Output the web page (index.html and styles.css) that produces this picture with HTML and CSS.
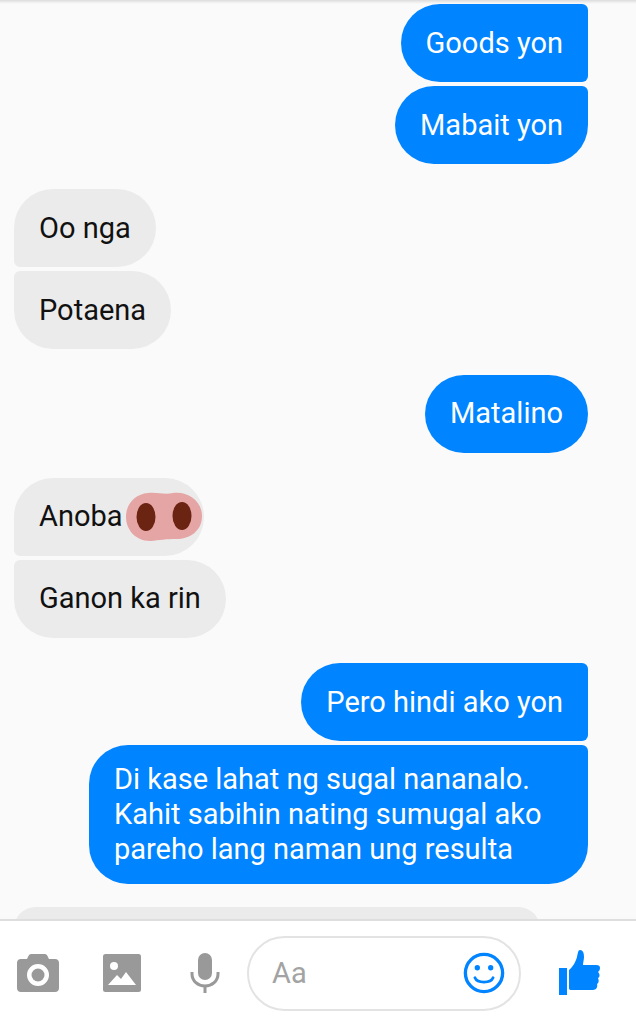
FILE: index.html
```html
<!DOCTYPE html>
<html lang="en">
<head>
    <meta charset="UTF-8">
    <meta name="viewport" content="width=device-width, initial-scale=1.0">
    <title>Messages</title>
    <link rel="stylesheet" href="styles.css">
</head>
<body>
    <div class="app">
        <!-- Conversation -->
        <div class="thread">
            <div class="group group-me">
                <div class="bubble me first">Goods yon</div>
                <div class="bubble me last">Mabait yon</div>
            </div>
            <div class="group group-them">
                <div class="bubble them first">Oo nga</div>
                <div class="bubble them last">Potaena</div>
            </div>
            <div class="group group-me">
                <div class="bubble me single">Matalino</div>
            </div>
            <div class="group group-them">
                <div class="bubble them first has-nose">Anoba
                    <svg class="nose" viewBox="0 0 76 50" width="76" height="50">
                        <path d="M22 1 C32 0 38 3 47 1 C62 -1 76 9 76 24 C76 39 64 47 50 47 C40 47 34 48 24 49 C10 49 0 38 0 25 C0 12 9 2 22 1 Z" fill="#e5a5a5"/>
                        <ellipse cx="20" cy="25" rx="9.500" ry="14" fill="#6b2312"/>
                        <ellipse cx="56" cy="24" rx="9.500" ry="14" fill="#6b2312"/>
                    </svg>
                </div>
                <div class="bubble them last">Ganon ka rin</div>
            </div>
            <div class="group group-me">
                <div class="bubble me first">Pero hindi ako yon</div>
                <div class="bubble me last wide">Di kase lahat ng sugal nananalo.<br>Kahit sabihin nating sumugal ako<br>pareho lang naman ung resulta</div>
            </div>
            <div class="group group-them">
                <div class="bubble them cut"></div>
            </div>
        </div>

        <!-- Input bar -->
        <div class="composer">
            <svg class="tool tool-camera" viewBox="0 0 42 38" width="42" height="38">
                <path fill-rule="evenodd" fill="#999" d="M14 0 H28 C30 0 31 3 32 5 H38 C40.500 5 42 6.500 42 9 V34 C42 36.500 40.500 38 38 38 H4 C1.500 38 0 36.500 0 34 V9 C0 6.500 1.500 5 4 5 H10 C11 3 12 0 14 0 Z M21 10 A11 11 0 1 0 21 32 A11 11 0 1 0 21 10 Z"/>
                <circle cx="21" cy="21" r="6.500" fill="#999"/>
            </svg>
            <svg class="tool tool-image" viewBox="0 0 38 38" width="38" height="38">
                <rect width="38" height="38" rx="2.500" fill="#999"/>
                <circle cx="11" cy="12" r="4" fill="#fff"/>
                <path d="M5 31 L14 21 L18 25 L23 18 L33 31 Z" fill="#fff"/>
            </svg>
            <svg class="tool tool-mic" viewBox="0 0 30 40" width="30" height="40">
                <rect x="8" y="0" width="14" height="27" rx="7" fill="#999"/>
                <path d="M2 19 V21 C2 28 8 33 15 33 C22 33 28 28 28 21 V19" fill="none" stroke="#999" stroke-width="3"/>
                <rect x="13.500" y="33" width="3" height="7" fill="#999"/>
            </svg>
            <div class="input">
                <span class="placeholder">Aa</span>
                <svg class="smiley" viewBox="0 0 44 44" width="42" height="42">
                    <circle cx="22" cy="22" r="19.500" fill="none" stroke="#0084ff" stroke-width="3.500"/>
                    <circle cx="15" cy="16.500" r="2.800" fill="#0084ff"/>
                    <circle cx="29" cy="16.500" r="2.800" fill="#0084ff"/>
                    <path d="M12.500 27 C15 33 29 33 31.500 27" fill="none" stroke="#0084ff" stroke-width="3" stroke-linecap="round"/>
                </svg>
            </div>
            <svg class="like" viewBox="0 0 42 46" width="42" height="46">
                <rect x="1" y="18" width="8" height="27" fill="#0084ff"/>
                <path d="M11 20 C15 17 18 11 19 7 C20 3 20 0 22 0 C25 0 26 3 26 7 C26 10 25 12 25 15 H38 C41 15 42 16 42 18 C42 20 41 21 40 22 C42 24 42 27 40 28 C41 30 41 33 39 34 C40 37 38 40 35 40 H16 C12 40 11 40 11 38 Z" fill="#0084ff"/>
            </svg>
        </div>
    </div>
</body>
</html>
```

FILE: styles.css
```css
html, body {
    margin: 0;
    padding: 0;
}

body {
    font-family: Roboto, "Liberation Sans", sans-serif;
    background-color: #fafafa;
}

.app {
    display: flex;
    flex-direction: column;
    height: 1023px;
    overflow: hidden;
}

.thread {
    flex: 1;
    min-height: 0;
    overflow: hidden;
    padding: 4px 48px 0 14px;
    background: linear-gradient(#dcdcdc, #f4f4f4 3px, #fafafa 4px);
}

.group {
    display: flex;
    flex-direction: column;
    gap: 4px;
    margin-bottom: 25.300px;
}

.group-me {
    align-items: flex-end;
}

.group-them {
    align-items: flex-start;
}

.bubble {
    box-sizing: border-box;
    padding: 21.500px 25px;
    font-size: 29px;
    line-height: 35px;
    min-height: 78px;
    border-radius: 39px;
}

.me {
    background-color: #0084ff;
    color: #fff;
}

.them {
    background-color: #ebebeb;
    color: #111;
}

.me.first {
    border-radius: 39px 6px 6px 39px;
}

.me.last {
    border-radius: 39px 6px 39px 39px;
}

.them.first {
    border-radius: 39px 39px 39px 6px;
}

.them.last {
    border-radius: 6px 39px 39px 39px;
}

.wide {
    width: 499px;
    padding-top: 17px;
    padding-bottom: 17px;
}

.has-nose {
    display: flex;
    align-items: center;
    gap: 3px;
    padding: 0 2px 0 25px;
}

.nose {
    display: block;
}

.cut {
    width: 526px;
    min-height: 40px;
    margin-top: -2px;
}

.composer {
    flex: none;
    display: flex;
    align-items: center;
    box-sizing: border-box;
    height: 104px;
    padding: 2px 0 0 17px;
    background-color: #fff;
    border-top: 2px solid #dedede;
}

.tool {
    flex: none;
}

.tool-camera {
    margin-right: 44px;
}

.tool-image {
    margin-right: 49px;
}

.tool-mic {
    margin-right: 27px;
}

.input {
    flex: none;
    display: flex;
    align-items: center;
    justify-content: space-between;
    box-sizing: border-box;
    width: 274px;
    height: 75px;
    padding: 0 14px 0 23px;
    border: 2px solid #e3e3e3;
    border-radius: 38px;
    background-color: #fff;
}

.placeholder {
    font-size: 29px;
    color: #a3a3a3;
}

.like {
    flex: none;
    margin-left: 37px;
}
```
